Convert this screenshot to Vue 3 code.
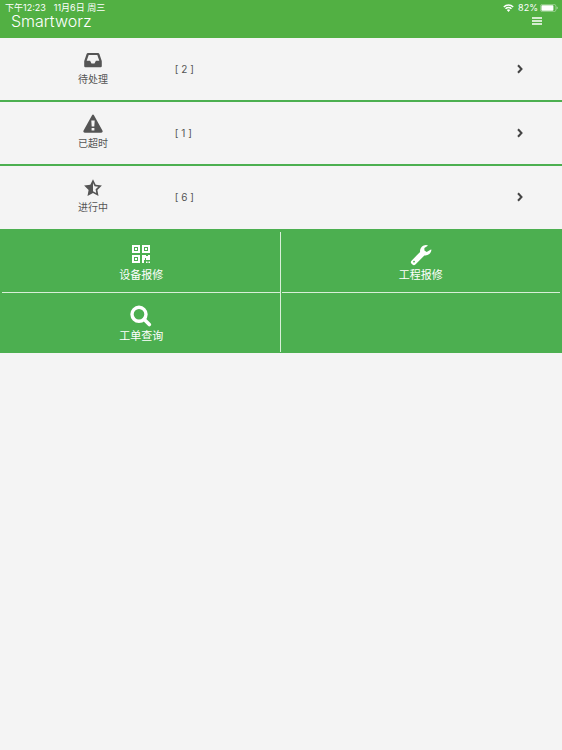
<script setup>
const tasks = [
  { key: 'pending', label: '待处理', count: 2 },
  { key: 'overdue', label: '已超时', count: 1 },
  { key: 'progress', label: '进行中', count: 6 },
]

const actions = [
  { key: 'device', label: '设备报修' },
  { key: 'project', label: '工程报修' },
  { key: 'search', label: '工单查询' },
]
</script>

<template>
  <div class="app">
    <header class="header">
      <div class="status">
        <span>下午12:23</span>
        <span class="date">11月6日 周三</span>
        <svg class="wifi" viewBox="0 0 20 15" aria-hidden="true">
          <g fill="none" stroke="#fff" stroke-width="2.8">
            <path d="M1.2 5.6a12.6 12.6 0 0 1 17.6 0" />
            <path d="M4.4 9a8 8 0 0 1 11.2 0" />
          </g>
          <path d="M6.8 11.4a4.6 4.6 0 0 1 6.4 0L10 14.8z" fill="#fff" />
        </svg>
        <span>82%</span>
        <svg class="battery" viewBox="0 0 36 16" aria-hidden="true">
          <rect x="0.8" y="0.8" width="31" height="14.4" rx="3.6" fill="none" stroke="#fff" stroke-opacity="0.5" stroke-width="1.4" />
          <rect x="2.8" y="2.4" width="24" height="11.2" rx="1.6" fill="#fff" />
          <path d="M33.4 5.2c2.6 1 2.6 4.6 0 5.6z" fill="#fff" fill-opacity="0.6" />
        </svg>
      </div>
      <div class="bar">
        <h1 class="title">Smartworz</h1>
        <button class="menu" type="button" aria-label="Menu">
          <svg viewBox="0 0 20 16" aria-hidden="true">
            <path d="M0 2h20M0 8h20M0 14h20" stroke="#fff" stroke-width="2.8" />
          </svg>
        </button>
      </div>
    </header>

    <main>
      <nav class="tasks">
        <a v-for="task in tasks" :key="task.key" class="task" href="#">
          <span class="task-type">
            <svg v-if="task.key === 'pending'" class="task-icon" viewBox="0 0 20 20" aria-hidden="true">
              <path fill-rule="evenodd" d="M5 3h10q1 0 1.400 1l2.200 6.400q.2.5.2 1V16q0 1.200-1.200 1.200H2.400Q1.200 17.200 1.200 16v-4.600q0-.5.2-1L3.600 4Q4 3 5 3zM5.700 5 3.700 10.800h3.400l1.400 2.700h3l1.400-2.700h3.400L14.300 5z" />
            </svg>
            <svg v-else-if="task.key === 'overdue'" class="task-icon" viewBox="0 0 20 20" aria-hidden="true">
              <path fill-rule="evenodd" d="M8.900 1.400q1.100-1.700 2.200 0l8.300 15.100q.9 2-1.200 2.200H1.800Q-.3 18.500.6 16.500zM8.300 6.600l.4 6h2.600l.4-6zM8.600 13.900v2.500h2.800v-2.500z" />
            </svg>
            <svg v-else class="task-icon" viewBox="0 0 20 20" aria-hidden="true">
              <path fill-rule="evenodd" d="M10 1.200l2.700 5.600 6.200.8-4.500 4.300 1.100 6.200-5.500-3-5.500 3 1.100-6.200L1.100 7.600l6.200-.8zM10 4.900v8.400l3.200 1.700-.6-3.700 2.700-2.500-3.700-.5z" />
            </svg>
            <span class="task-label">{{ task.label }}</span>
          </span>
          <span class="count">[ {{ task.count }} ]</span>
          <svg class="chevron" viewBox="0 0 12 20" aria-hidden="true">
            <path d="M2 2.500 9 10l-7 7.500" fill="none" stroke="#444" stroke-width="4" />
          </svg>
        </a>
      </nav>

      <nav class="actions">
        <a v-for="action in actions" :key="action.key" class="action" href="#">
          <svg v-if="action.key === 'device'" class="action-icon" viewBox="0 0 22 22" aria-hidden="true">
            <path fill-rule="evenodd" d="M2 1h8v8H2zM4 3v4h4V3zM12 1h8v8h-8zM14 3v4h4V3zM2 11h8v8H2zM4 13v4h4v-4zM5 4h2v2H5zM15 4h2v2h-2zM5 14h2v2H5zM12 11h4v1h2v-1h2v5h-4v-2h-1v2h-1v3h-2zM16 17.500h1.500V19H16zM18.500 17.500H20V19h-1.500z" />
          </svg>
          <svg v-else-if="action.key === 'project'" class="action-icon" viewBox="0 0 22 22" aria-hidden="true">
            <path fill-rule="evenodd" d="M17.800 1.800 14.400 3.900v2.700l2.300 1.300 4.200-2.400q.6-.2.500.500c-.5 3.600-3.600 5.900-7 5.400L5.400 20.600q-1.500 1.400-3 0l-1-1.100q-1.200-1.400.1-2.800l8.600-8.800C9.600 4 12.600 1 16 .9q1.200 0 1.900.5.300.2-.1.400zM4 16.800a.9.900 0 1 0 .1 1.800.9.900 0 0 0-.1-1.800z" />
          </svg>
          <svg v-else class="action-icon" viewBox="0 0 22 22" aria-hidden="true">
            <circle cx="9" cy="9.300" r="7" fill="none" stroke="#fff" stroke-width="3.400" />
            <path d="M14.300 14.600 19.300 19.600" stroke="#fff" stroke-width="3.600" stroke-linecap="round" />
          </svg>
          <span>{{ action.label }}</span>
        </a>
        <div class="action"></div>
      </nav>
    </main>
  </div>
</template>

<style>
body {
  margin: 0;
  background: #f4f4f4;
}
</style>

<style scoped>
.app {
  min-height: 100vh;
  background: #f4f4f4;
  color: #555;
  font-family: Inter, "Noto Sans CJK SC", sans-serif;
}

a {
  color: inherit;
  text-decoration: none;
}

.header {
  height: 38px;
  background: #52b043;
  color: #fff;
}

.status {
  display: flex;
  align-items: center;
  height: 14px;
  padding: 1px 4px 0 5px;
  box-sizing: border-box;
  font-size: 9px;
  line-height: 12px;
}

.date {
  margin-left: 8px;
}

.wifi {
  width: 11px;
  height: 8px;
  margin-left: auto;
  margin-right: 4px;
}

.battery {
  width: 18px;
  height: 8px;
  margin-left: 2px;
}

.bar {
  display: flex;
  align-items: center;
  justify-content: space-between;
  height: 14px;
  padding: 0 20px 0 11px;
}

.title {
  margin: 0;
  font-size: 16px;
  font-weight: 300;
  line-height: 14px;
}

.menu {
  display: flex;
  padding: 0;
  border: 0;
  background: none;
}

.menu svg {
  width: 10px;
  height: 8px;
}

.task {
  display: flex;
  align-items: center;
  height: 62px;
  padding: 0 39px 0 11px;
  border-bottom: 2px solid #4caf50;
}

.task:last-child {
  padding-bottom: 1px;
  border-bottom: 0;
}

.task-type {
  display: flex;
  flex-direction: column;
  align-items: center;
  flex: 0 0 32%;
  padding-bottom: 2px;
}

.task-icon {
  width: 20px;
  height: 20px;
  fill: #555;
}

.task-label {
  margin-top: 2px;
  font-size: 10px;
  line-height: 14px;
}

.count {
  flex: 1;
  font-size: 10px;
}

.chevron {
  width: 6px;
  height: 10px;
}

.actions {
  display: grid;
  grid-template-columns: 1fr 1fr;
  grid-template-rows: 60px 59px;
  gap: 1px;
  padding: 3px 2px 1px;
  background: #4caf50;
}

.action {
  position: relative;
  display: flex;
  flex-direction: column;
  align-items: center;
  padding-top: 12px;
  color: #fff;
  font-size: 11px;
  line-height: 16px;
}

.action:nth-child(odd)::after {
  position: absolute;
  top: 0;
  right: 0;
  bottom: 0;
  border-right: 1px solid #d8efd8;
  content: "";
}

.action:nth-child(-n + 2)::before {
  position: absolute;
  right: 0;
  bottom: -1px;
  left: 0;
  border-bottom: 1px solid #d8efd8;
  content: "";
}

.action-icon {
  width: 22px;
  height: 22px;
  margin-bottom: 1px;
  fill: #fff;
}
</style>
